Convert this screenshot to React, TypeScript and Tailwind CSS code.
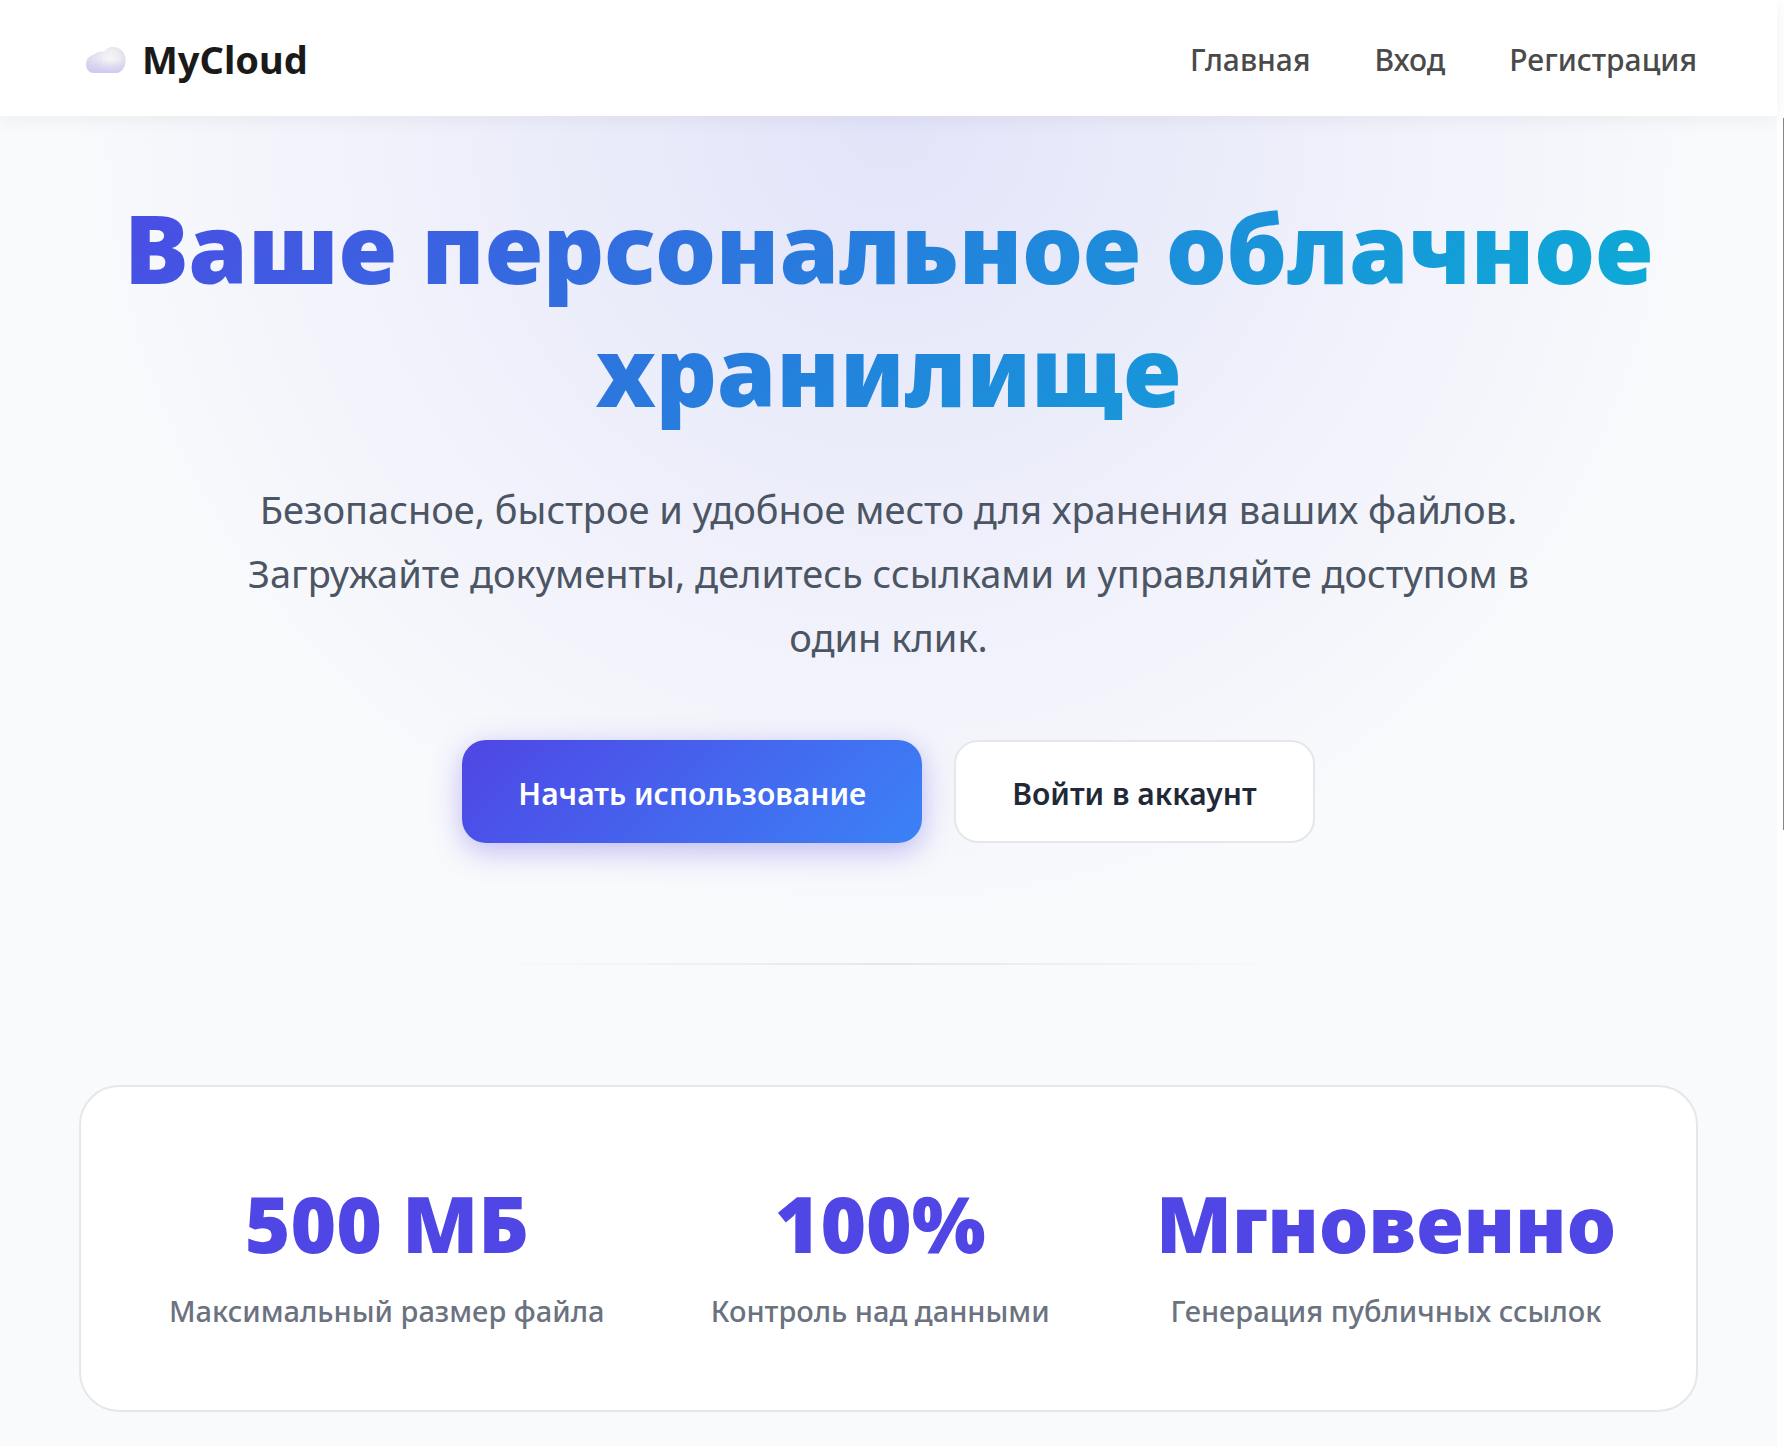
const NAV_LINKS = [
  { label: "Главная", href: "#home" },
  { label: "Вход", href: "#login" },
  { label: "Регистрация", href: "#register" },
];

const STATS = [
  { value: "500 МБ", label: "Максимальный размер файла" },
  { value: "100%", label: "Контроль над данными" },
  { value: "Мгновенно", label: "Генерация публичных ссылок" },
];

function CloudIcon() {
  return (
    <svg viewBox="0 0 40 26" className="h-[26px] w-10" aria-hidden="true">
      <defs>
        <radialGradient id="cloud-left" cx="0.85" cy="0.4" r="0.85">
          <stop offset="0" stopColor="#fafafc" />
          <stop offset="0.5" stopColor="#ecebf3" />
          <stop offset="1" stopColor="#dcd7ec" />
        </radialGradient>
        <radialGradient id="cloud-right" cx="0.35" cy="0.45" r="0.7">
          <stop offset="0" stopColor="#f6f6f9" />
          <stop offset="0.55" stopColor="#ecebf1" />
          <stop offset="1" stopColor="#dddbe6" />
        </radialGradient>
        <linearGradient id="cloud-shade" x1="0" y1="0" x2="0" y2="1">
          <stop offset="0.5" stopColor="#cfc6f2" stopOpacity="0" />
          <stop offset="1" stopColor="#cfc6f2" stopOpacity="0.9" />
        </linearGradient>
        <path
          id="cloud-shape"
          d="M8.5 26C3.8 26 0 22.6 0 17.5 0 11 4.500 8.500 8 7.500 10.500 4.800 14.500 3.800 18.200 4.700 20 1.800 23.300 0 27 0 34 0 39.500 5.500 39.500 13 39.500 20.500 35.500 26 29.500 26Z"
        />
      </defs>
      <use href="#cloud-shape" fill="url(#cloud-left)" />
      <path
        d="M27 0C34 0 39.500 5.500 39.500 13 39.500 20.500 35.500 26 29.500 26H19C15.500 21 15 10 18.200 4.700 20 1.800 23.300 0 27 0Z"
        fill="url(#cloud-right)"
      />
      <use href="#cloud-shape" fill="url(#cloud-shade)" />
    </svg>
  );
}

function Header() {
  return (
    <header className="relative z-10 bg-white shadow-[0_2px_20px_rgba(0,0,0,0.06)]">
      <div className="flex h-[116px] items-center justify-between px-20 pt-[3px]">
        <a href="#home" className="flex items-center gap-4 pl-[6px] text-[38px] font-bold text-[#1a1a1a]">
          <CloudIcon />
          MyCloud
        </a>
        <nav className="flex items-center gap-16 text-[30px] font-medium text-[#4a4a4a]">
          {NAV_LINKS.map((link) => (
            <a key={link.href} href={link.href}>
              {link.label}
            </a>
          ))}
        </nav>
      </div>
    </header>
  );
}

function Hero() {
  return (
    <section className="flex flex-col items-center px-10 pt-[69px] text-center">
      <h1 className="bg-[linear-gradient(135deg,#4f46e5_0%,#2383dc_50%,#06b6d4_100%)] bg-clip-text text-[96px] leading-[123px] font-black text-transparent">
        Ваше персональное облачное хранилище
      </h1>
      <p className="mt-[46px] max-w-[1300px] text-[38px] leading-[64px] text-[#4b5563]">
        Безопасное, быстрое и удобное место для хранения ваших файлов. Загружайте документы, делитесь ссылками и
        управляйте доступом в один клик.
      </p>
      <div className="mt-[71px] flex gap-8 text-[30px] font-semibold">
        <button
          type="button"
          className="h-[103px] rounded-3xl bg-[linear-gradient(135deg,#4f46e5,#3b82f6)] px-14 pt-[3px] text-white shadow-[0_8px_30px_rgba(79,70,229,0.35)]"
        >
          Начать использование
        </button>
        <button
          type="button"
          className="h-[103px] rounded-3xl border-2 border-[#e5e7eb] bg-white px-14 pt-[3px] text-[#1f2937]"
        >
          Войти в аккаунт
        </button>
      </div>
    </section>
  );
}

function Stats() {
  return (
    <section className="mx-[79px] flex items-center justify-between rounded-[40px] border-2 border-[#e5e7eb] bg-white pt-20 pr-20 pb-[79px] pl-[88px] text-center">
      {STATS.map((stat) => (
        <div key={stat.label}>
          <div className="text-[78px] leading-[112px] font-black text-[#4f46e5]">{stat.value}</div>
          <div className="mt-3 text-[29px] leading-10 font-medium text-[#6b7280]">{stat.label}</div>
        </div>
      ))}
    </section>
  );
}

export default function App() {
  return (
    <div className="flex min-h-screen bg-[#f9fafc] font-['Noto_Sans','Open_Sans',sans-serif]">
      <div className="min-w-0 flex-1">
        <Header />
        <main className="bg-[radial-gradient(circle_at_50%_0,rgba(72,76,228,0.13)_0,rgba(72,76,228,0)_820px)] pb-8">
          <Hero />
          <hr className="mx-auto mt-[120px] mb-[120px] h-[2px] w-[800px] border-0 bg-[linear-gradient(90deg,transparent,#e5e7eb,transparent)]" />
          <Stats />
        </main>
      </div>
      <div className="flex w-[7px] justify-end bg-white pt-[118px]" aria-hidden="true">
        <div className="h-[712px] w-px bg-[#858585]" />
      </div>
    </div>
  );
}
